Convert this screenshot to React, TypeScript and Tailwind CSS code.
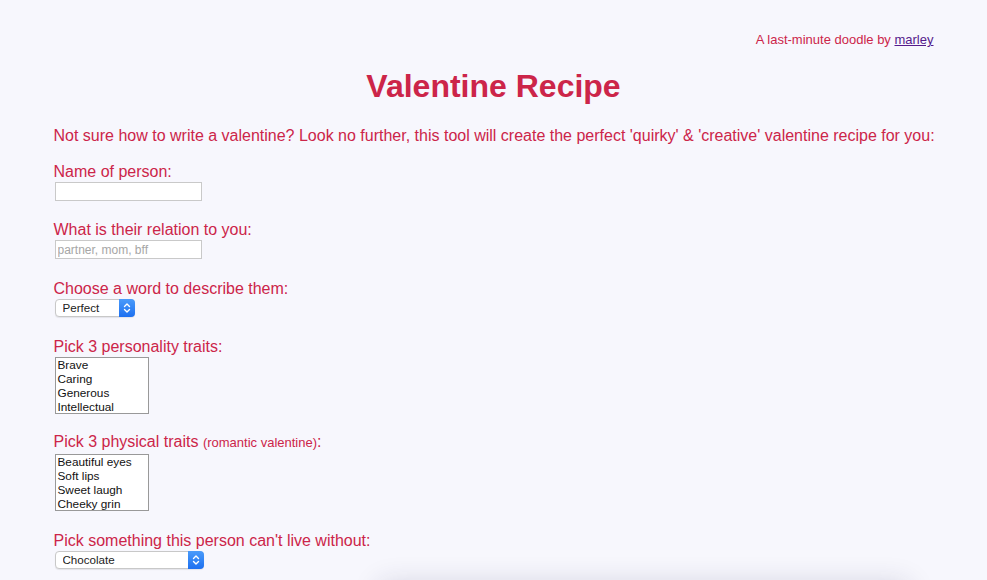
import { ReactNode } from 'react'

const words = ['Perfect', 'Amazing', 'Wonderful', 'Beautiful']
const personality = ['Brave', 'Caring', 'Generous', 'Intellectual']
const physical = ['Beautiful eyes', 'Soft lips', 'Sweet laugh', 'Cheeky grin']
const things = ['Chocolate', 'Coffee', 'Netflix', 'Pizza']

function Stepper() {
  return (
    <span className="pointer-events-none absolute right-0 top-0 flex h-full w-[16px] items-center justify-center rounded-r-[4px] bg-gradient-to-b from-[#4a9bfa] to-[#1d6ff0]">
      <svg width="8" height="12" viewBox="0 0 8 12" fill="none" stroke="white" strokeWidth="1.4" strokeLinecap="round" strokeLinejoin="round">
        <path d="M1.5 4.5 L4 2 L6.5 4.5" />
        <path d="M1.5 7.5 L4 10 L6.5 7.5" />
      </svg>
    </span>
  )
}

function Select({ options, width, className }: { options: string[]; width: string; className: string }) {
  return (
    <div className={`relative ml-px h-[18px] ${width} ${className}`}>
      <select className="block h-full w-full appearance-none rounded-[4px] border border-[#c8c8c8] bg-white pl-[7px] text-[11.6px] leading-[16px] text-[#222] shadow-[0_1px_1px_rgba(0,0,0,0.08)] outline-none">
        {options.map(o => (
          <option key={o}>{o}</option>
        ))}
      </select>
      <Stepper />
    </div>
  )
}

function ListBox({ items, className }: { items: string[]; className: string }) {
  return (
    <div className={`ml-px h-[57px] w-[94px] overflow-hidden border border-[#999] bg-white px-[2px] ${className}`}>
      {items.map(i => (
        <div key={i} className="text-[11.8px] leading-[14px] text-[#111]">
          {i}
        </div>
      ))}
    </div>
  )
}

function Field({ label, children, className, labelPad = 'pt-[3px]' }: { label: ReactNode; children: ReactNode; className: string; labelPad?: string }) {
  return (
    <div className={className}>
      <label className={`block text-[16px] leading-[17px] ${labelPad}`}>{label}</label>
      {children}
    </div>
  )
}

export default function App() {
  return (
    <div className="min-h-screen bg-[#f7f7fd] font-['Liberation_Sans',Arial,sans-serif] text-[#cc2549]">
      <div className="mx-auto w-[880px] pb-16 pt-[32px]">
        <p className="text-right text-[13px] leading-[15px]">
          A last-minute doodle by <a href="#" className="text-[#551a8b] underline">marley</a>
        </p>

        <h1 className="mt-[21px] text-center text-[32px] font-bold leading-[37px]">Valentine Recipe</h1>

        <p className="mt-[22px] whitespace-nowrap text-[16px] leading-[18px]">
          Not sure how to write a valentine? Look no further, this tool will create the perfect 'quirky' &amp; 'creative' valentine recipe for you:
        </p>

        <form className="mt-[15px]">
          <Field label="Name of person:" className="mb-[17px]">
            <input type="text" className="ml-px mt-[2px] block h-[19px] w-[147px] border border-[#c9c9c9] bg-white px-[2px] text-[12px] text-[#222] outline-none" />
          </Field>

          <Field label="What is their relation to you:" className="mb-[18px]">
            <input
              type="text"
              placeholder="partner, mom, bff"
              className="ml-px mt-[2px] block h-[19px] w-[147px] border border-[#c9c9c9] bg-white px-[2px] text-[12px] text-[#222] outline-none placeholder:text-[#a6a6a6]"
            />
          </Field>

          <Field label="Choose a word to describe them:" className="mb-[20px]">
            <Select options={words} width="w-[80px]" className="mt-[2px]" />
          </Field>

          <Field label="Pick 3 personality traits:" labelPad="pt-px" className="mb-[17px]">
            <ListBox items={personality} className="mt-[2px]" />
          </Field>

          <Field
            label={
              <>
                Pick 3 physical traits <span className="text-[13px]">(romantic valentine)</span>:
              </>
            }
            labelPad="pt-[2px]"
            className="mb-[20px]"
          >
            <ListBox items={physical} className="mt-[3px]" />
          </Field>

          <Field label="Pick something this person can't live without:" labelPad="pt-px" className="mb-[14px]">
            <Select options={things} width="w-[149px]" className="mt-[2px]" />
          </Field>
        </form>

        {/* recipe card, mostly below the fold */}
        <div className="ml-[325px] h-[300px] w-[530px] rounded-md bg-[#f7f7fd] shadow-[0_0_28px_rgba(30,30,80,0.16)]" />
      </div>
    </div>
  )
}
